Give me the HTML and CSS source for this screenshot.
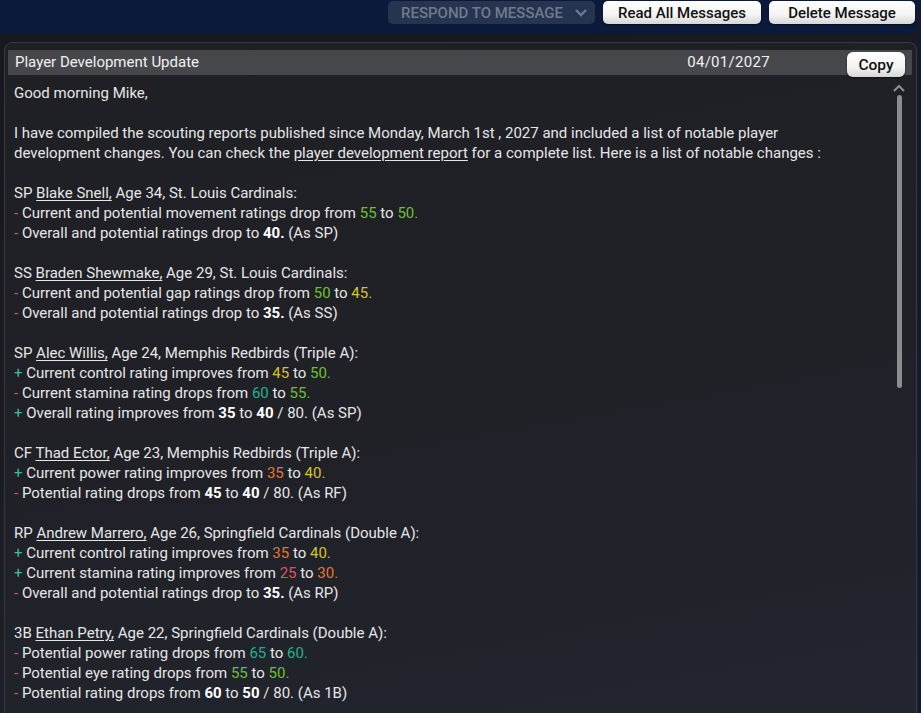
FILE: index.html
```html
<!DOCTYPE html>
<html>
<head>
<meta charset="utf-8">
<link rel="stylesheet" href="styles.css">
</head>
<body>
<div class="topbar">
  <div class="respond">RESPOND TO MESSAGE <svg class="chev" width="14" height="10" viewBox="0 0 14 10"><path d="M2 2 L7 7 L12 2" fill="none" stroke="#6f7a8e" stroke-width="2.4"/></svg></div>
  <button class="btn btn-read">Read All Messages</button>
  <button class="btn btn-del">Delete Message</button>
</div>
<div class="panel">
  <div class="header">
    <span class="title">Player Development Update</span>
    <span class="date">04/01/2027</span>
    <button class="btn copy">Copy</button>
  </div>
  <div class="body">
    <div class="text">
      <p>Good morning Mike,</p>
      <p><span>I have compiled the scouting reports published since Monday, March 1st , 2027 and included a list of notable player</span><br>
      <span>development changes. You can check the </span><u>player development report</u><span> for a complete list. Here is a list of notable changes :</span></p>
      <p>SP <u>Blake Snell,</u> Age 34, St. Louis Cardinals:<br>
      <span class="m">-</span> Current and potential movement ratings drop from <span class="g">55</span> to <span class="g">50.</span><br>
      <span class="m">-</span> Overall and potential ratings drop to <b>40.</b> (As SP)</p>
      <p>SS <u>Braden Shewmake,</u> Age 29, St. Louis Cardinals:<br>
      <span class="m">-</span> Current and potential gap ratings drop from <span class="g">50</span> to <span class="y">45.</span><br>
      <span class="m">-</span> Overall and potential ratings drop to <b>35.</b> (As SS)</p>
      <p>SP <u>Alec Willis,</u> Age 24, Memphis Redbirds (Triple A):<br>
      <span class="p">+</span> Current control rating improves from <span class="y">45</span> to <span class="g">50.</span><br>
      <span class="m">-</span> Current stamina rating drops from <span class="t">60</span> to <span class="g">55.</span><br>
      <span class="p">+</span> Overall rating improves from <b>35</b> to <b>40</b> / 80. (As SP)</p>
      <p>CF <u>Thad Ector,</u> Age 23, Memphis Redbirds (Triple A):<br>
      <span class="p">+</span> Current power rating improves from <span class="o">35</span> to <span class="y">40.</span><br>
      <span class="m">-</span> Potential rating drops from <b>45</b> to <b>40</b> / 80. (As RF)</p>
      <p>RP <u>Andrew Marrero,</u> Age 26, Springfield Cardinals (Double A):<br>
      <span class="p">+</span> Current control rating improves from <span class="o">35</span> to <span class="y">40.</span><br>
      <span class="p">+</span> Current stamina rating improves from <span class="r">25</span> to <span class="o">30.</span><br>
      <span class="m">-</span> Overall and potential ratings drop to <b>35.</b> (As RP)</p>
      <p>3B <u>Ethan Petry,</u> Age 22, Springfield Cardinals (Double A):<br>
      <span class="m">-</span> Potential power rating drops from <span class="t">65</span> to <span class="t">60.</span><br>
      <span class="m">-</span> Potential eye rating drops from <span class="g">55</span> to <span class="g">50.</span><br>
      <span class="m">-</span> Potential rating drops from <b>60</b> to <b>50</b> / 80. (As 1B)</p>
    </div>
    <div class="scroll">
      <svg width="14" height="9" viewBox="0 0 14 9"><path d="M2 7 L7 2 L12 7" fill="none" stroke="#8d8f94" stroke-width="2"/></svg>
      <div class="thumb"></div>
    </div>
  </div>
</div>
</body>
</html>
```
FILE: styles.css
```css
html, body {
  margin: 0;
  padding: 0;
}
body {
  width: 921px;
  height: 713px;
  overflow: hidden;
  font-family: Roboto, "Liberation Sans", sans-serif;
  background:
    linear-gradient(to right, transparent 918px, #0f1a33 918px),
    linear-gradient(165deg, #17181d 0%, #1a1c22 45%, #1e2230 100%);
  color: #e8e8e8;
}
.topbar {
  width: 917px;
  height: 34px;
  box-sizing: border-box;
  background: #0b1a3b;
  border-bottom-right-radius: 8px;
  display: flex;
  justify-content: flex-end;
  align-items: flex-start;
  padding: 1px 2px 0 0;
  gap: 8px;
}
.respond {
  width: 207px;
  height: 23px;
  box-sizing: border-box;
  background: #27344f;
  border-radius: 5px;
  color: #6f7a8e;
  font-size: 15px;
  display: flex;
  align-items: center;
  justify-content: space-between;
  padding: 0 7px 0 13px;
  font-weight: 500;
}
.chev { margin-top: 1px; }
.btn {
  font-family: Roboto, "Liberation Sans", sans-serif;
  font-size: 15px;
  font-weight: 500;
  color: #111;
  border: none;
  border-radius: 5px;
  background: linear-gradient(#ffffff 0%, #f4f4f4 60%, #d6d6d6 100%);
  box-shadow: 0 1px 2px rgba(0,0,0,0.5);
  height: 23px;
  padding: 0;
  cursor: default;
}
.btn-read { width: 158px; }
.btn-del { width: 146px; }
.panel {
  margin: 8px 4px 0 4px;
  height: 680px;
  box-sizing: border-box;
  border: 1px solid #38393e;
  border-radius: 8px;
  background: linear-gradient(170deg, #1f2024 0%, #202127 55%, #22252f 100%);
  padding: 7px 4px 0 3px;
}
.header {
  height: 25px;
  background: #46474b;
  display: flex;
  align-items: flex-start;
  font-size: 15px;
  color: #f0f0f0;
}
.title {
  flex: 1;
  padding-left: 7px;
  line-height: 25px;
}
.date {
  line-height: 25px;
  letter-spacing: 0.3px;
}
.copy {
  width: 58px;
  height: 25px;
  margin: 2px 7px 0 77px;
  font-size: 15.5px;
  border-radius: 6px;
}
.body {
  display: flex;
  padding: 8px 0 0 6px;
}
.text {
  flex: 1;
  font-size: 15px;
  line-height: 20px;
  color: #e6e6e6;
  padding-right: 30px;
}
.text p {
  margin: 0 0 20px 0;
}
.text u {
  text-underline-offset: 2px;
}
.text b { color: #fff; }
.m { color: #d9545c; }
.p { color: #33c09a; }
.g { color: #6cc12c; }
.y { color: #d6c22a; }
.t { color: #22b08e; }
.o { color: #e7762a; }
.r { color: #e0525e; }
.scroll {
  width: 14px;
  margin: 1px 6px 0 10px;
  display: flex;
  flex-direction: column;
  align-items: center;
}
.thumb {
  width: 5px;
  height: 293px;
  margin-top: 2px;
  background: #8b8c90;
  border-radius: 3px;
}
```
